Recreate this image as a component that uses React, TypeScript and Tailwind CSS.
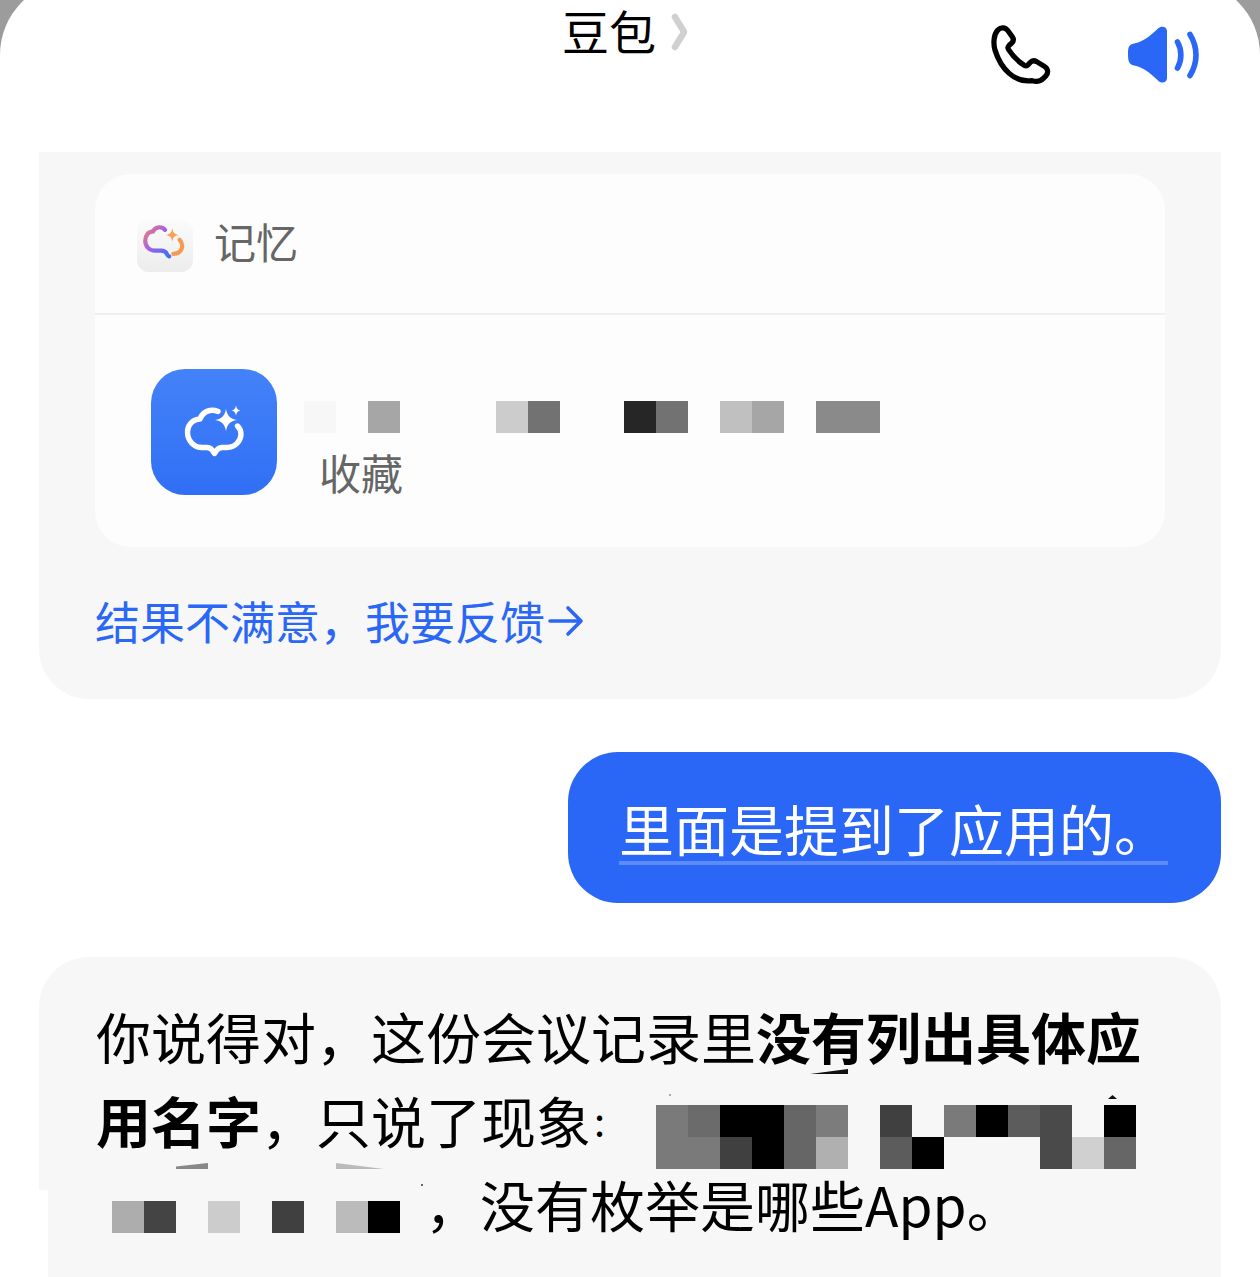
const CJK = "font-['Noto_Sans_CJK_SC','Liberation_Sans',sans-serif]";

// 打码块：每格 32px，空字符串表示露出底色
function Mosaic({ cells, rows = 1, className = "" }: { cells: string[]; rows?: number; className?: string }) {
  return (
    <div
      className={`grid grid-flow-col auto-cols-[32px] ${rows === 2 ? "grid-rows-[32px_32px]" : "grid-rows-[32px]"} ${className}`}
    >
      {cells.map((c, i) => (
        <span key={i} className={c} />
      ))}
    </div>
  );
}

function PhoneIcon() {
  return (
    <svg width="75" height="75" viewBox="0 0 60 60" fill="none" stroke="#000" strokeWidth="4.2" strokeLinejoin="round" strokeLinecap="round">
      <path d="M7 6.500c2.500-2.600 6-2.400 8 .3l3.600 5c1.300 1.900 1 3.800-.6 5.200l-2 1.800c-1 1-1.100 2-.3 3.300 3.500 5.400 7.300 9.300 12.400 12.500 1.200.7 2.300.6 3.200-.4l1.600-1.800c1.500-1.600 3.300-1.800 5.200-.7l6.200 3.800c3 1.800 3.500 5.300 1 7.800l-1.800 1.800c-2.400 2.300-5.500 3-9 1.800C20.500 49 9.500 37.500 4.800 22.500 3.300 17 3.700 10 7 6.500Z" />
    </svg>
  );
}

function SpeakerIcon() {
  return (
    <svg width="72" height="60" viewBox="0 0 72 60" fill="none">
      <path
        d="M0 28C0 21 1 18.500 6 17.500 15 16 22 10 30 2.500 33-.5 39 .5 39 5v47c0 5-6 6-9 2.500C22 47 15 41 6 39.500 1 38.500 0 35 0 28Z"
        fill="#2b67f6"
      />
      <path d="M49.500 16c4.500 8 4.500 18 0 26" stroke="#2b67f6" strokeWidth="5.600" strokeLinecap="round" />
      <path d="M62 8.500c8 13 8 28 0 41" stroke="#2b67f6" strokeWidth="5.600" strokeLinecap="round" />
    </svg>
  );
}

function MemoryBadge() {
  return (
    <div className="flex h-[52px] w-[56px] items-center justify-center rounded-[12px] bg-gradient-to-b from-[#fbfbfb] to-[#ececec]">
      <svg width="50" height="46" viewBox="0 0 48 44" fill="none" strokeWidth="4" strokeLinecap="round">
        <defs>
          <linearGradient id="memA" x1="0" y1="0" x2="1" y2="1">
            <stop offset="0" stopColor="#f0806f" />
            <stop offset="0.45" stopColor="#a060ea" />
            <stop offset="1" stopColor="#3f70f0" />
          </linearGradient>
        </defs>
        <path
          d="M24 6.500C21 3 15 3 12.500 8 8 8 5 12 5 17c0 5.500 4 9.500 9.500 9.500h5.500c3 0 5 1 6 3.500 .5 1 1 1.500 2 2"
          stroke="url(#memA)"
        />
        <path d="M38 16c3 3 3.500 8 .5 11-1.500 1.500-3.500 2.500-6.500 2.500" stroke="#f59a50" />
        <path d="M31 5c.8 4.500 2 5.700 6.500 6.500-4.500.8-5.700 2-6.500 6.500-.8-4.500-2-5.700-6.500-6.500 4.500-.8 5.700-2 6.500-6.500Z" fill="#f6a05a" strokeWidth="0" />
      </svg>
    </div>
  );
}

function MemoryApp() {
  return (
    <div className="flex h-[126px] w-[126px] shrink-0 items-center justify-center rounded-[34px] bg-gradient-to-b from-[#4482f8] to-[#306ff5]">
      <svg width="62" height="58" viewBox="0 0 62 58" fill="none" stroke="#fff" strokeWidth="5.400" strokeLinecap="round" strokeLinejoin="round">
        <path d="M35 8.500C28 5.500 20 8 17 16 9 16.500 4.500 22.500 4.500 29c0 9 6.500 15.500 14.500 15.500h5c2.500 0 4 1 5.500 3l2 3 2-3c1.500-2 3.500-3 6-3h4.500c8 0 14-6.500 14-13.500 0-3-1.500-6-3.500-8" />
        <path d="M43 6c1.200 6.500 4 9.800 11 11-7 1.200-9.800 4.500-11 11-1.200-6.500-4-9.800-11-11 7-1.200 9.800-4.500 11-11Z" fill="#fff" strokeWidth="0" />
        <path d="M53 2.500c.6 3 1.800 4.500 4.500 5-2.700.5-3.900 2-4.500 5-.6-3-1.800-4.500-4.500-5 2.700-.5 3.900-2 4.500-5Z" fill="#fff" strokeWidth="0" />
      </svg>
    </div>
  );
}

// 打码时留下的细碎残影
const SLIVERS = [
  "left-[810px] top-[1069px] w-[38px] h-[5px] bg-[#111] [clip-path:polygon(0_100%,100%_0,100%_100%)]",
  "left-[176px] top-[1163px] w-[32px] h-[6px] bg-[#888] [clip-path:polygon(0_60%,100%_0,100%_100%,0_100%)]",
  "left-[336px] top-[1163px] w-[48px] h-[6px] bg-[#bbb] [clip-path:polygon(0_0,100%_100%,0_100%)]",
  "left-[1108px] top-[1095px] w-[9px] h-[4px] bg-[#111] [clip-path:polygon(50%_0,100%_100%,0_100%)]",
  "left-[669px] top-[1094px] w-[2px] h-[2px] bg-[#aaa]",
  "left-[421px] top-[1184px] w-[2px] h-[2px] bg-[#666]",
];

export default function App() {
  return (
    <div className={`relative h-[1277px] w-[1260px] overflow-hidden bg-[#9c9c9c] ${CJK}`}>
      <div className="-mt-[20px] h-[1297px] rounded-t-[75px] bg-white pt-[20px]">
        {/* 顶栏 */}
        <header className="flex h-[152px] items-start">
          <div className="ml-[562px] flex items-center">
            <span className="text-[47px] leading-[60px] text-black">豆包</span>
            <svg width="20" height="40" viewBox="0 0 20 40" className="ml-[14px] mt-[3px]" fill="none">
              <path d="M5 5c5 9 8 12 9 15-1 3-4 6-9 15" stroke="#d0d0d0" strokeWidth="6.500" strokeLinecap="round" strokeLinejoin="round" />
            </svg>
          </div>
          <div className="ml-[299px] mt-[22px]">
            <PhoneIcon />
          </div>
          <div className="ml-[64px] mt-[26px]">
            <SpeakerIcon />
          </div>
        </header>

        {/* 记忆卡片 */}
        <section className="mx-[39px] rounded-b-[50px] bg-[#f7f7f7] px-[56px] pt-[22px]">
          <div className="h-[373px] rounded-[36px] bg-[#fdfdfd]">
            <div className="flex h-[141px] items-center border-b-2 border-[#efefef] pl-[42px]">
              <div className="mt-[4px]">
                <MemoryBadge />
              </div>
              <span className="ml-[21px] -mt-[7px] text-[42px] text-[#666]">记忆</span>
            </div>
            <div className="flex pl-[56px] pt-[54px]">
              <MemoryApp />
              <div className="ml-[27px] pt-[32px]">
                <Mosaic
                  cells={[
                    "bg-[#f7f7f7]", "", "bg-[#a6a6a6]", "", "", "", "bg-[#cccccc]", "bg-[#727272]", "", "",
                    "bg-[#262626]", "bg-[#727272]", "", "bg-[#c0c0c0]", "bg-[#a6a6a6]", "", "bg-[#8a8a8a]", "bg-[#8a8a8a]",
                  ]}
                />
                <p className="ml-[15px] mt-[9px] text-[42px] leading-[60px] text-[#666]">收藏</p>
              </div>
            </div>
          </div>
          <div className="flex h-[152px] items-start pt-[43px] text-[45px] leading-[62px] text-[#2b67f6]">
            <span>结果不满意，我要反馈</span>
            <svg width="40" height="62" viewBox="0 0 40 62" fill="none" stroke="#2b67f6" strokeWidth="3.600" strokeLinecap="round" strokeLinejoin="round">
              <path d="M5 31h31M23 18l13 13-13 13" />
            </svg>
          </div>
        </section>

        {/* 用户气泡 */}
        <div className="mt-[53px] flex justify-end pr-[39px]">
          <div className="h-[151px] w-[653px] rounded-[50px] bg-[#2b67f6] pl-[51px] pt-[43px]">
            <p className="w-[549px] whitespace-nowrap border-b-[4px] border-[#5c8bfa] pb-[2px] text-[55px] leading-[64px] text-white">里面是提到了应用的。</p>
          </div>
        </div>

        {/* 回复气泡 */}
        <section className="relative mx-[39px] mt-[54px] h-[320px] rounded-t-[50px] bg-[#f7f7f7] pl-[57px] pt-[36px] text-[55px] text-black">
          <div className="flex h-[84px] items-center whitespace-nowrap">
            <span>你说得对，这份会议记录里</span>
            <span className="font-bold">没有列出具体应</span>
          </div>
          <div className="flex h-[84px] items-center whitespace-nowrap">
            <span className="font-bold">用名字</span>
            <span>，只说了现象</span>
            <span className="w-[12px] pl-[3px] text-[40px]">:</span>
            <Mosaic
              rows={2}
              className="ml-[53px] mt-[28px] self-start"
              cells={[
                "bg-[#7a7a7a]", "bg-[#7a7a7a]", "bg-[#6b6b6b]", "bg-[#7a7a7a]", "bg-black", "bg-[#404040]", "bg-black", "bg-black",
                "bg-[#666666]", "bg-[#666666]", "bg-[#7c7c7c]", "bg-[#b0b0b0]", "", "", "bg-[#404040]", "bg-[#5c5c5c]", "", "bg-black",
                "bg-[#7a7a7a]", "", "bg-black", "", "bg-[#5c5c5c]", "", "bg-[#4a4a4a]", "bg-[#4a4a4a]", "", "bg-[#d0d0d0]", "bg-black", "bg-[#666666]",
              ]}
            />
          </div>
          <div className="flex h-[84px] items-center whitespace-nowrap">
            <Mosaic
              className="ml-[16px] mt-[40px] self-start"
              cells={["bg-[#adadad]", "bg-[#444444]", "", "bg-[#cccccc]", "", "bg-[#404040]", "", "bg-[#bbbbbb]", "bg-black"]}
            />
            <span className="ml-[25px]">，没有枚举是哪些App。</span>
          </div>
        </section>
      </div>

      {SLIVERS.map((s) => (
        <span key={s} className={`absolute ${s}`} />
      ))}

      {/* 截图底部左侧的白色切口 */}
      <span className="absolute left-[39px] top-[1190px] h-[87px] w-[9px] bg-white" />
    </div>
  );
}
